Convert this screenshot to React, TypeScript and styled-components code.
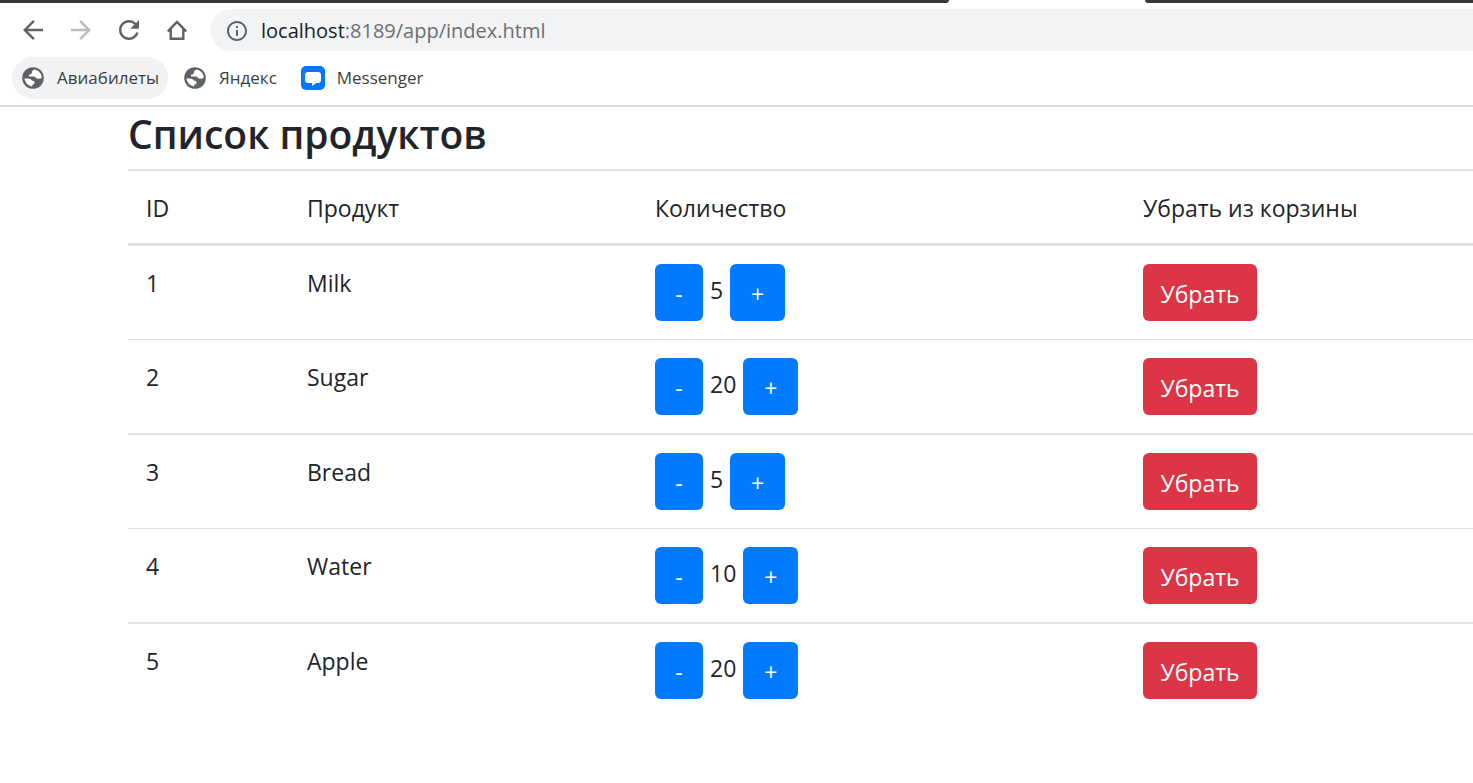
import React, { useState } from "react";
import styled, { createGlobalStyle } from "styled-components";

const GlobalStyle = createGlobalStyle`
  *, *::before, *::after { box-sizing: border-box; }
  body {
    margin: 0;
    background: #fff;
    color: #212529;
    font: 400 23px/36px "Segoe UI", "Open Sans", "Liberation Sans", sans-serif;
    overflow-x: hidden;
  }
`;

const TabStrip = styled.div`
  display: flex;
  height: 3px;
  background: #fff;
`;

const StripPart = styled.div<{ $side: "left" | "right" }>`
  background: #3b3839;
  flex: ${(p) => (p.$side === "left" ? "0 0 949px" : "1")};
  border-radius: ${(p) => (p.$side === "left" ? "0 0 4px 0" : "0 0 0 4px")};
`;

const ActiveTab = styled.div`
  flex: 0 0 196px;
`;

const Toolbar = styled.nav`
  display: flex;
  align-items: center;
  gap: 18px;
  padding: 6px 0 6px 18px;
`;

const IconButton = styled.button<{ $muted?: boolean }>`
  display: flex;
  padding: 0;
  border: 0;
  background: none;
  color: ${(p) => (p.$muted ? "#babcbe" : "#5f6368")};
`;

const AddressBar = styled.div`
  flex: 1;
  display: flex;
  align-items: center;
  gap: 12px;
  height: 42px;
  padding: 1px 0 0 15px;
  background: #f1f3f4;
  border-radius: 21px 0 0 21px;
  color: #5f6368;
  font-size: 20px;
`;

const Url = styled.a`
  color: #6c6f73;
  text-decoration: none;
`;

const Host = styled.span`
  color: #202124;
`;

const Bookmarks = styled.nav`
  display: flex;
  align-items: center;
  gap: 6px;
  padding: 0 12px 6px;
  border-bottom: 2px solid #dcdcdc;
`;

const Bookmark = styled.a<{ $active?: boolean }>`
  display: flex;
  align-items: center;
  gap: 12px;
  height: 42px;
  padding: 0 9px;
  border-radius: 21px;
  background: ${(p) => (p.$active ? "#f2f2f2" : "transparent")};
  color: #3c4043;
  font-size: 17px;
  text-decoration: none;
`;

const Page = styled.main`
  padding: 1px 0 0 128px;
`;

const Title = styled.h1`
  margin: 0 0 9px;
  font-size: 39px;
  font-weight: 600;
  line-height: 52px;
`;

const Table = styled.table`
  width: 100%;
  table-layout: fixed;
  border-spacing: 0;
  text-align: left;
`;

const HeadCell = styled.th<{ $width?: number }>`
  width: ${(p) => (p.$width ? `${p.$width}px` : "auto")};
  padding: 19px 18px 17px;
  border-top: 2px solid #dee2e6;
  border-bottom: 3px solid #dee2e6;
  font-weight: 400;
`;

const Cell = styled.td<{ $line: number; $text?: boolean }>`
  padding: ${(p) => (p.$text ? "19px 18px 17px" : "18px")};
  border-bottom: ${(p) => p.$line}px solid #dee2e6;
  vertical-align: top;
`;

const Stepper = styled.div`
  display: flex;
  gap: 7px;
`;

const Amount = styled.span`
  padding-top: 8px;
`;

const Button = styled.button<{ $tone: "primary" | "danger"; $width: number }>`
  width: ${(p) => p.$width}px;
  height: 57px;
  padding: 2px 0 0;
  border: 0;
  border-radius: 6px;
  background: ${(p) => (p.$tone === "primary" ? "#007bff" : "#dc3545")};
  color: #fff;
  font: inherit;
  display: block;
`;

const Glyph = ({ d, size = 30 }: { d: string; size?: number }) => (
  <svg width={size} height={size} viewBox="0 0 24 24" fill="currentColor" aria-hidden="true">
    <path d={d} />
  </svg>
);

const icons = {
  back: "M20 11H7.83l5.59-5.59L12 4l-8 8 8 8 1.41-1.41L7.83 13H20v-2z",
  forward: "M12 4l-1.41 1.41L16.17 11H4v2h12.17l-5.58 5.59L12 20l8-8z",
  reload:
    "M17.65 6.35C16.2 4.9 14.21 4 12 4c-4.42 0-7.99 3.58-7.99 8s3.57 8 7.99 8c3.73 0 6.84-2.55 7.73-6h-2.08c-.82 2.33-3.04 4-5.65 4-3.31 0-6-2.69-6-6s2.69-6 6-6c1.66 0 3.14.69 4.22 1.78L13 11h7V4l-2.35 2.35z",
  info: "M11 17h2v-6h-2v6zm1-15C6.48 2 2 6.48 2 12s4.48 10 10 10 10-4.48 10-10S17.52 2 12 2zm0 18c-4.41 0-8-3.59-8-8s3.59-8 8-8 8 3.59 8 8-3.59 8-8 8zM11 9h2V7h-2v2z",
};

const HomeIcon = () => (
  <svg width="30" height="30" viewBox="0 0 30 30" fill="none" stroke="currentColor" strokeWidth="2.4" aria-hidden="true">
    <path d="M5.8 16.400 15 7 24.200 16.400M8.700 14V23.800H21.300V14" />
  </svg>
);

const GlobeIcon = () => (
  <svg width="24" height="24" viewBox="0 0 24 24" aria-hidden="true">
    <circle cx="12" cy="12" r="10.8" fill="#5f6368" />
    <path
      fill="#fff"
      d="M13.6 3.6c-1.6.6-2.8 1.6-2.8 3.2 0 1.400-1.300 1.700-2.600 2-.7.2-.5 1.400.3 1.600h4.200c1.800 0 2 1.600 3.200 2.200 1.700.7 3.400-.2 4.800-.5.2-3.800-2.600-7.700-7.100-8.500zM3.500 12.600c.4 4 3.700 7.400 7.700 7.800v-1.700c1.500-.2 2.300-1 2.300-2.300 0-1.200-1-1.500-2.400-1.600-1-2-3-2.400-7.600-2.200z"
    />
  </svg>
);

const MessengerIcon = () => (
  <svg width="24" height="24" viewBox="0 0 24 24" aria-hidden="true">
    <rect width="24" height="24" rx="5" fill="#0077ff" />
    <path fill="#fff" d="M7 6h10a3 3 0 0 1 3 3v5a3 3 0 0 1-3 3h-2l-4 3.200v-3.200H7a3 3 0 0 1-3-3V9a3 3 0 0 1 3-3z" />
  </svg>
);

type Product = { id: number; title: string; count: number };

const initialProducts: Product[] = [
  { id: 1, title: "Milk", count: 5 },
  { id: 2, title: "Sugar", count: 20 },
  { id: 3, title: "Bread", count: 5 },
  { id: 4, title: "Water", count: 10 },
  { id: 5, title: "Apple", count: 20 },
];

export default function App() {
  const [products, setProducts] = useState(initialProducts);

  const change = (id: number, delta: number) =>
    setProducts((list) => list.map((p) => (p.id === id ? { ...p, count: Math.max(0, p.count + delta) } : p)));
  const remove = (id: number) => setProducts((list) => list.filter((p) => p.id !== id));

  return (
    <>
      <GlobalStyle />
      <TabStrip>
        <StripPart $side="left" />
        <ActiveTab />
        <StripPart $side="right" />
      </TabStrip>
      <Toolbar>
        <IconButton aria-label="Назад"><Glyph d={icons.back} /></IconButton>
        <IconButton aria-label="Вперёд" $muted><Glyph d={icons.forward} /></IconButton>
        <IconButton aria-label="Обновить"><Glyph d={icons.reload} /></IconButton>
        <IconButton aria-label="Домой"><HomeIcon /></IconButton>
        <AddressBar>
          <Glyph d={icons.info} size={24} />
          <Url href="#"><Host>localhost</Host>:8189/app/index.html</Url>
        </AddressBar>
      </Toolbar>
      <Bookmarks>
        <Bookmark href="#" $active><GlobeIcon />Авиабилеты</Bookmark>
        <Bookmark href="#"><GlobeIcon />Яндекс</Bookmark>
        <Bookmark href="#"><MessengerIcon />Messenger</Bookmark>
      </Bookmarks>
      <Page>
        <Title>Список продуктов</Title>
        <Table>
          <thead>
            <tr>
              <HeadCell $width={161}>ID</HeadCell>
              <HeadCell $width={348}>Продукт</HeadCell>
              <HeadCell $width={488}>Количество</HeadCell>
              <HeadCell>Убрать из корзины</HeadCell>
            </tr>
          </thead>
          <tbody>
            {products.map((p, i) => {
              const line = i === products.length - 1 ? 0 : 1 + (i % 2);
              return (
                <tr key={p.id}>
                  <Cell $line={line} $text>{p.id}</Cell>
                  <Cell $line={line} $text>{p.title}</Cell>
                  <Cell $line={line}>
                    <Stepper>
                      <Button $tone="primary" $width={48} onClick={() => change(p.id, -1)}>-</Button>
                      <Amount>{p.count}</Amount>
                      <Button $tone="primary" $width={55} onClick={() => change(p.id, 1)}>+</Button>
                    </Stepper>
                  </Cell>
                  <Cell $line={line}>
                    <Button $tone="danger" $width={114} onClick={() => remove(p.id)}>Убрать</Button>
                  </Cell>
                </tr>
              );
            })}
          </tbody>
        </Table>
      </Page>
    </>
  );
}
